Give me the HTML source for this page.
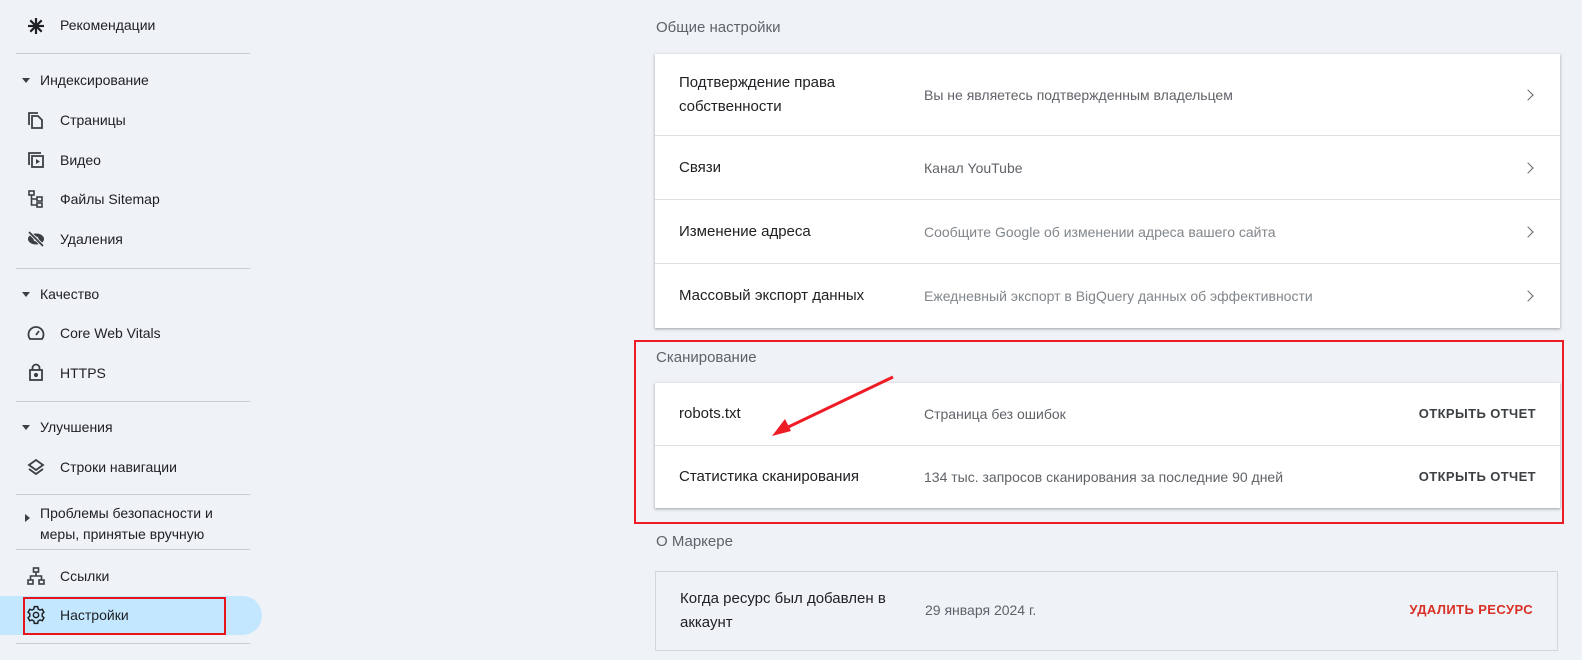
<!DOCTYPE html>
<html><head><meta charset="utf-8"><style>
*{box-sizing:border-box;margin:0;padding:0}
body{width:1582px;height:660px;background:#eff2f7;font-family:"Liberation Sans",sans-serif;position:relative;overflow:hidden;color:#202124}
.a{position:absolute}
.nav{font-size:14px;color:#202124}
.hr{position:absolute;left:16px;width:234px;height:1px;background:#c9ccd1}
.ic{position:absolute;left:26px;width:20px;height:20px}
.card{position:absolute;left:655px;width:905px;background:#fff;box-shadow:0 1px 2px rgba(60,64,67,.3),0 1px 3px 1px rgba(60,64,67,.12)}
.row{position:relative;border-bottom:1px solid #e0e0e0}
.row:last-child{border-bottom:none}
.t{position:absolute;left:24px;font-size:15px;color:#202124;line-height:24px}
.d{position:absolute;left:269px;font-size:14px;color:#5f6368;line-height:24px}
.d.l{color:#80868b}
.ch{position:absolute;right:28px;width:8px;height:8px;border-right:1.6px solid #5f6368;border-top:1.6px solid #5f6368;transform:rotate(45deg)}
.btn{position:absolute;right:24px;font-size:13px;font-weight:bold;color:#3c4043;letter-spacing:.4px;line-height:24px}
.sec{position:absolute;left:656px;font-size:15px;color:#5f6368}
</style></head><body>
<div class="a nav" style="left:60px;top:17px">Рекомендации</div>
<svg class="ic" style="top:16px" viewBox="0 0 20 20"><g stroke="#202124" stroke-width="2.2"><line x1="10" y1="2" x2="10" y2="18"/><line x1="2" y1="10" x2="18" y2="10"/><line x1="4.3" y1="4.3" x2="15.7" y2="15.7"/><line x1="15.7" y1="4.3" x2="4.3" y2="15.7"/></g></svg>
<div class="hr" style="top:53px"></div>
<div class="a" style="left:22px;top:78px;border-left:4px solid transparent;border-right:4px solid transparent;border-top:5px solid #3c4043"></div>
<div class="a nav" style="left:40px;top:72px">Индексирование</div>
<svg class="ic" style="top:110px" viewBox="0 0 20 20" fill="none" stroke="#3c4043" stroke-width="1.8"><path d="M3 15V3h9"/><path d="M6 6h6l4 4v8H6z"/></svg>
<div class="a nav" style="left:60px;top:112px">Страницы</div>
<svg class="ic" style="top:150px" viewBox="0 0 20 20" fill="none" stroke="#3c4043" stroke-width="1.8"><path d="M3 15V3h12"/><rect x="6" y="6" width="11" height="11"/><path d="M10 9l4 2.5-4 2.5z" fill="#3c4043" stroke="none"/></svg>
<div class="a nav" style="left:60px;top:152px">Видео</div>
<svg class="ic" style="top:189px" viewBox="0 0 20 20" fill="none" stroke="#3c4043" stroke-width="1.6"><rect x="3" y="2" width="5" height="4"/><path d="M5.5 6v10h5M5.5 10h5"/><rect x="11" y="8" width="5" height="4"/><rect x="11" y="14" width="5" height="4"/></svg>
<div class="a nav" style="left:60px;top:191px">Файлы Sitemap</div>
<svg class="ic" style="top:229px" viewBox="0 0 20 20"><ellipse cx="10" cy="10" rx="8" ry="5.5" fill="#3c4043"/><circle cx="10" cy="10" r="2.5" fill="#eff2f7"/><line x1="3" y1="3" x2="17" y2="17" stroke="#eff2f7" stroke-width="3.5"/><line x1="3" y1="3" x2="17" y2="17" stroke="#3c4043" stroke-width="1.8"/></svg>
<div class="a nav" style="left:60px;top:231px">Удаления</div>
<div class="hr" style="top:268px"></div>
<div class="a" style="left:22px;top:292px;border-left:4px solid transparent;border-right:4px solid transparent;border-top:5px solid #3c4043"></div>
<div class="a nav" style="left:40px;top:286px">Качество</div>
<svg class="ic" style="top:323px" viewBox="0 0 20 20" fill="none" stroke="#3c4043" stroke-width="1.8"><path d="M4 16a7.5 7.5 0 1 1 12 0z"/><line x1="10" y1="12" x2="13" y2="8"/></svg>
<div class="a nav" style="left:60px;top:325px">Core Web Vitals</div>
<svg class="ic" style="top:362px" viewBox="0 0 20 20" fill="none" stroke="#3c4043" stroke-width="1.8"><rect x="4" y="8" width="12" height="10"/><path d="M6.5 8V6a3.5 3.5 0 0 1 7 0v2"/><circle cx="10" cy="13" r="1.2" fill="#3c4043"/></svg>
<div class="a nav" style="left:60px;top:365px">HTTPS</div>
<div class="hr" style="top:401px"></div>
<div class="a" style="left:22px;top:425px;border-left:4px solid transparent;border-right:4px solid transparent;border-top:5px solid #3c4043"></div>
<div class="a nav" style="left:40px;top:419px">Улучшения</div>
<svg class="ic" style="top:457px" viewBox="0 0 20 20" fill="none" stroke="#3c4043" stroke-width="1.8"><path d="M10 3l7 5-7 5-7-5z"/><path d="M3 12l7 5 7-5"/></svg>
<div class="a nav" style="left:60px;top:459px">Строки навигации</div>
<div class="hr" style="top:494px"></div>
<div class="a" style="left:25px;top:514px;border-top:4px solid transparent;border-bottom:4px solid transparent;border-left:5px solid #3c4043"></div>
<div class="a nav" style="left:40px;top:503px;line-height:21px">Проблемы безопасности и<br>меры, принятые вручную</div>
<div class="hr" style="top:549px"></div>
<svg class="ic" style="top:566px" viewBox="0 0 20 20" fill="none" stroke="#3c4043" stroke-width="1.6"><rect x="7.5" y="2" width="5" height="4"/><path d="M10 6v4M4.5 14v-4h11v4"/><rect x="2" y="14" width="5" height="4"/><rect x="13" y="14" width="5" height="4"/></svg>
<div class="a nav" style="left:60px;top:568px">Ссылки</div>
<div class="a" style="left:0;top:596px;width:262px;height:39px;background:#c2e7ff;border-radius:0 20px 20px 0"></div>
<div class="a" style="left:23px;top:597px;width:203px;height:38px;border:2px solid #e8141c"></div>
<svg class="ic" style="top:605px" viewBox="0 0 24 24" fill="none" stroke="#202124" stroke-width="1.8"><path d="M10 2h4l.6 2.8 2.2 1.3 2.7-.9 2 3.5-2.1 1.9v2.8l2.1 1.9-2 3.5-2.7-.9-2.2 1.3L14 22h-4l-.6-2.8-2.2-1.3-2.7.9-2-3.5 2.1-1.9v-2.8L2.5 8.7l2-3.5 2.7.9 2.2-1.3z"/><circle cx="12" cy="12" r="3.2"/></svg>
<div class="a nav" style="left:60px;top:607px">Настройки</div>
<div class="hr" style="top:643px"></div>

<div class="sec" style="top:19px">Общие настройки</div>
<div class="card" style="top:54px">
 <div class="row" style="height:82px"><div class="t" style="top:17px">Подтверждение права<br>собственности</div><div class="d" style="top:29px">Вы не являетесь подтвержденным владельцем</div><div class="ch" style="top:37px"></div></div>
 <div class="row" style="height:64px"><div class="t" style="top:20px">Связи</div><div class="d" style="top:20px">Канал YouTube</div><div class="ch" style="top:28px"></div></div>
 <div class="row" style="height:64px"><div class="t" style="top:20px">Изменение адреса</div><div class="d l" style="top:20px">Сообщите Google об изменении адреса вашего сайта</div><div class="ch" style="top:28px"></div></div>
 <div class="row" style="height:64px"><div class="t" style="top:20px">Массовый экспорт данных</div><div class="d l" style="top:20px">Ежедневный экспорт в BigQuery данных об эффективности</div><div class="ch" style="top:28px"></div></div>
</div>
<div class="sec" style="top:349px">Сканирование</div>
<div class="card" style="top:383px">
 <div class="row" style="height:63px"><div class="t" style="top:19px">robots.txt</div><div class="d" style="top:19px">Страница без ошибок</div><div class="btn" style="top:19px">ОТКРЫТЬ ОТЧЕТ</div></div>
 <div class="row" style="height:62px"><div class="t" style="top:19px">Статистика сканирования</div><div class="d" style="top:19px">134 тыс. запросов сканирования за последние 90 дней</div><div class="btn" style="top:19px">ОТКРЫТЬ ОТЧЕТ</div></div>
</div>
<div class="a" style="left:634px;top:340px;width:930px;height:184px;border:2.5px solid #ee1c24"></div>
<svg class="a" style="left:760px;top:370px" width="140" height="80"><line x1="133" y1="7" x2="22" y2="60" stroke="#ee1c24" stroke-width="3"/><path d="M12 66l13-17 6 12z" fill="#ee1c24"/></svg>
<div class="sec" style="top:533px">О Маркере</div>
<div class="a" style="left:655px;top:571px;width:903px;height:80px;border:1px solid #d3d6da;background:#eff2f7">
 <div class="t" style="left:24px;top:15px">Когда ресурс был добавлен в<br>аккаунт</div>
 <div class="d" style="left:269px;top:26px">29 января 2024 г.</div>
 <div class="btn" style="top:26px;color:#d93025">УДАЛИТЬ РЕСУРС</div>
</div>
</body></html>
